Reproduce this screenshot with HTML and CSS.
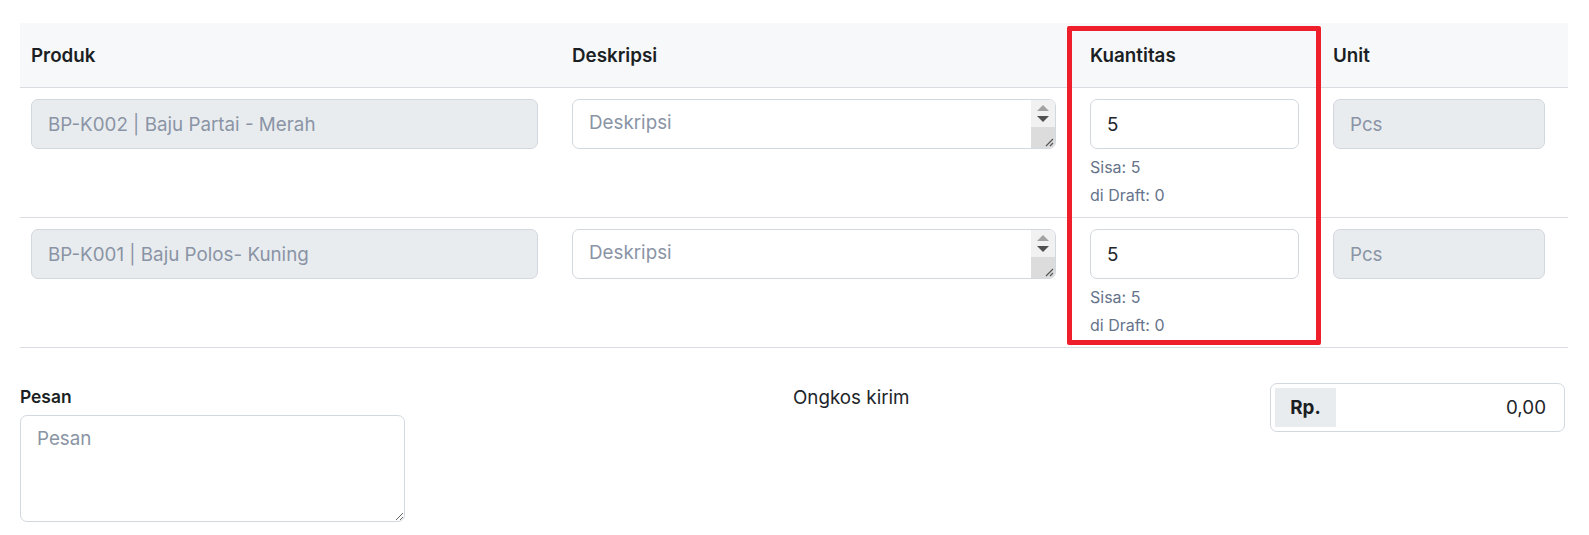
FILE: index.html
```html
<!DOCTYPE html>
<html lang="id">
<head>
<meta charset="utf-8">
<title>Produk</title>
<link rel="stylesheet" href="styles.css">
</head>
<body>
<div class="page">
  <div class="table">
    <div class="row head">
      <div class="cell th">Produk</div>
      <div class="cell th">Deskripsi</div>
      <div class="cell th">Kuantitas</div>
      <div class="cell th">Unit</div>
    </div>

    <div class="row body">
      <div class="cell"><input class="field disabled" type="text" value="BP-K002 | Baju Partai - Merah" disabled></div>
      <div class="cell">
        <div class="area">
          <textarea class="area-text" placeholder="Deskripsi"></textarea>
          <div class="scroll">
            <div class="scroll-arrows"><span class="tri up"></span><span class="tri down"></span></div>
            <div class="scroll-grip"><svg width="10" height="10" viewBox="0 0 10 10"><path d="M9 2L2 9M9 6L6 9" stroke="#555" stroke-width="1.2"/></svg></div>
          </div>
        </div>
      </div>
      <div class="cell">
        <input class="field" type="text" value="5">
        <div class="hint">Sisa: 5</div>
        <div class="hint">di Draft: 0</div>
      </div>
      <div class="cell"><input class="field disabled" type="text" value="Pcs" disabled></div>
    </div>

    <div class="row body">
      <div class="cell"><input class="field disabled" type="text" value="BP-K001 | Baju Polos- Kuning" disabled></div>
      <div class="cell">
        <div class="area">
          <textarea class="area-text" placeholder="Deskripsi"></textarea>
          <div class="scroll">
            <div class="scroll-arrows"><span class="tri up"></span><span class="tri down"></span></div>
            <div class="scroll-grip"><svg width="10" height="10" viewBox="0 0 10 10"><path d="M9 2L2 9M9 6L6 9" stroke="#555" stroke-width="1.2"/></svg></div>
          </div>
        </div>
      </div>
      <div class="cell">
        <input class="field" type="text" value="5">
        <div class="hint">Sisa: 5</div>
        <div class="hint">di Draft: 0</div>
      </div>
      <div class="cell"><input class="field disabled" type="text" value="Pcs" disabled></div>
    </div>

    <div class="highlight"></div>
  </div>

  <div class="footer">
    <div class="note">
      <label class="note-label">Pesan</label>
      <textarea class="note-text" placeholder="Pesan"></textarea>
    </div>
    <div class="ship-label">Ongkos kirim</div>
    <div class="money">
      <span class="money-addon">Rp.</span>
      <span class="money-value">0,00</span>
    </div>
  </div>
</div>
</body>
</html>
```

FILE: styles.css
```css
* { box-sizing: border-box; }

body {
  margin: 0;
  background: #ffffff;
  font-family: Inter, "Noto Sans", "Liberation Sans", sans-serif;
  color: #212529;
}

.page {
  padding: 23px 21px 0 20px;
}

.table {
  position: relative;
}

.row {
  display: grid;
  grid-template-columns: 541px 518px 243px 246px;
  border-bottom: 1px solid #d9dce1;
}

.head {
  background: #f7f8fa;
  height: 65px;
  align-items: center;
}

.th {
  padding: 0 11px;
  font-size: 18.8px;
  font-weight: 600;
  color: #1b1f24;
}

.body .cell {
  padding: 11px 23px 8px 11px;
}

.field {
  display: block;
  width: 100%;
  height: 50px;
  padding: 0 16px;
  border: 1px solid #d3d7de;
  border-radius: 7px;
  background: #ffffff;
  font-family: inherit;
  font-size: 18.8px;
  color: #212529;
  outline: none;
}

.field.disabled {
  background: #e9ecef;
  color: #8a94a5;
  -webkit-text-fill-color: #8a94a5;
  opacity: 1;
}

.area {
  display: flex;
  height: 50px;
  border: 1px solid #d3d7de;
  border-radius: 7px;
  overflow: hidden;
  background: #ffffff;
}

.area-text {
  flex: 1;
  border: none;
  resize: none;
  outline: none;
  padding: 10px 16px 0;
  font-family: inherit;
  font-size: 18.8px;
  line-height: 26px;
  color: #212529;
  background: transparent;
}

.area-text::placeholder,
.note-text::placeholder {
  color: #8a94a5;
}

.scroll {
  width: 24px;
  display: flex;
  flex-direction: column;
}

.scroll-arrows {
  height: 27px;
  background: #f1f1f1;
  display: flex;
  flex-direction: column;
  align-items: center;
  padding-top: 5px;
  gap: 5px;
}

.tri {
  width: 0;
  height: 0;
  border-left: 6px solid transparent;
  border-right: 6px solid transparent;
}

.tri.up { border-bottom: 6px solid #a3a3a3; }
.tri.down { border-top: 6px solid #505050; }

.scroll-grip {
  flex: 1;
  background: #dcdcdc;
  display: flex;
  align-items: flex-end;
  justify-content: flex-end;
  padding: 0 1px 1px 0;
}

.scroll-grip svg { display: block; }

.hint {
  font-size: 16px;
  line-height: 28px;
  color: #66738a;
}

.hint:first-of-type {
  margin-top: 4px;
}

.highlight {
  position: absolute;
  left: 1047px;
  top: 3px;
  width: 254px;
  height: 319px;
  border: 5px solid #ee1f2b;
  border-radius: 2px;
  pointer-events: none;
}

.footer {
  display: grid;
  grid-template-columns: 773px 477px 295px;
  margin-top: 35px;
  align-items: start;
}

.note {
  display: flex;
  flex-direction: column;
}

.note-label {
  font-size: 17.4px;
  font-weight: 600;
  line-height: 20px;
  margin-top: 4px;
  margin-bottom: 8px;
  color: #1b1f24;
}

.note-text {
  width: 385px;
  height: 107px;
  border: 1px solid #d3d7de;
  border-radius: 7px;
  padding: 10px 16px;
  font-family: inherit;
  font-size: 18.8px;
  line-height: 26px;
  resize: both;
  outline: none;
}

.ship-label {
  font-size: 18.8px;
  line-height: 25px;
  margin-top: 2px;
  color: #212529;
}

.money {
  display: flex;
  align-items: stretch;
  height: 49px;
  padding: 4px 18px 4px 4px;
  border: 1px solid #d3d7de;
  border-radius: 7px;
}

.money-addon {
  width: 61px;
  background: #e9ecef;
  display: flex;
  align-items: center;
  justify-content: center;
  font-size: 18.8px;
  font-weight: 700;
  color: #1b1f24;
}

.money-value {
  flex: 1;
  display: flex;
  align-items: center;
  justify-content: flex-end;
  font-size: 18.8px;
  color: #212529;
}
```
